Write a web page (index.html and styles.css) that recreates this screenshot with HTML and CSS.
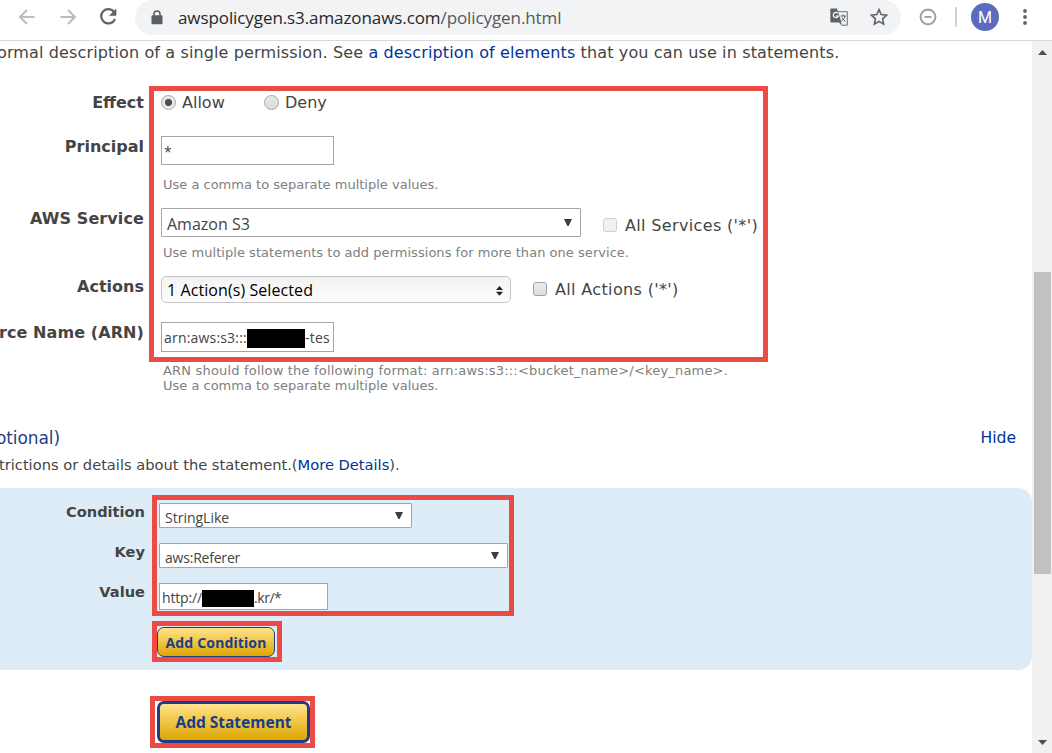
FILE: index.html
```html
<!DOCTYPE html>
<html lang="en">
<head>
<meta charset="utf-8">
<title>AWS Policy Generator</title>
<link rel="stylesheet" href="styles.css">
</head>
<body>
<header class="toolbar">
  <svg class="nav back" width="18" height="18" viewBox="0 0 18 18"><path d="M16.500 9H2.500M9 2L2 9l7 7"/></svg>
  <svg class="nav forward" width="18" height="18" viewBox="0 0 18 18"><path d="M1.500 9h14M9 2l7 7-7 7"/></svg>
  <svg class="reload" width="20" height="20" viewBox="0 0 20 20"><path class="ring" d="M16.300 5.200A7.200 7.200 0 1 0 17 12"/><path class="tip" d="M18.300 1.500v7.300H11z"/></svg>
  <div class="omnibox">
    <svg class="lock" width="12" height="15" viewBox="0 0 12 15"><path d="M3 6V4a3 3 0 0 1 6 0v2" fill="none" stroke="#5a5d61" stroke-width="1.500"/><rect x="0.500" y="5.300" width="11" height="9" rx="1" fill="#5a5d61"/></svg>
    <span class="url"><b>awspolicygen.s3.amazonaws.com</b>/policygen.html</span>
    <svg class="translate" width="19" height="19" viewBox="0 0 19 19"><path d="M8 3.700h9.300v13.500H11.500" fill="#f1f3f4" stroke="#6b6e72"/><path d="M1.500 0.500H7l4.500 14H1.500a1.200 1.200 0 0 1-1.200-1.200V1.700A1.200 1.200 0 0 1 1.500.5z" fill="#5f6368"/><path d="M7.800 5.300A2.600 2.600 0 1 0 8.300 8H5.800" fill="none" stroke="#fff" stroke-width="1.200"/><path d="M8.800 14.500h2.700v2.800z" fill="#5f6368"/><path d="M10.500 8h5.500M13.200 6.500V8M15 8c-.5 2.500-2 4-3.500 5M11.800 9.500c.8 1.800 2 3 3.700 4" fill="none" stroke="#5f6368"/></svg>
    <svg class="star" width="18" height="18" viewBox="0 0 18 18"><path d="M9 1.700l2.200 4.900 5.400.6-4 3.600 1.100 5.300L9 13.400l-4.700 2.700 1.100-5.300-4-3.600 5.400-.6z" fill="none" stroke="#5f6368" stroke-width="1.600"/></svg>
  </div>
  <svg class="extension" width="18" height="18" viewBox="0 0 18 18"><circle cx="9" cy="9" r="7.400" fill="none" stroke="#a3a3a3" stroke-width="2.100"/><path d="M5.500 9h7" stroke="#a3a3a3" stroke-width="2"/></svg>
  <i class="divider"></i>
  <span class="avatar">M</span>
  <svg class="more" width="4" height="18" viewBox="0 0 4 18"><circle cx="2" cy="3" r="1.900"/><circle cx="2" cy="9" r="1.900"/><circle cx="2" cy="15" r="1.900"/></svg>
</header>

<div class="viewport">
  <main class="page">
    <p class="intro">ormal description of a single permission. See <a>a description of elements</a> that you can use in statements.</p>

    <div class="row effect">
      <label>Effect</label>
      <div class="field choices">
        <i class="radio on"></i><span class="allow">Allow</span>
        <i class="radio"></i><span>Deny</span>
      </div>
    </div>
    <div class="row principal">
      <label>Principal</label>
      <div class="field">
        <div class="input"><span>*</span></div>
        <p class="hint">Use a comma to separate multiple values.</p>
      </div>
    </div>
    <div class="row service">
      <label>AWS Service</label>
      <div class="field">
        <div class="line">
          <div class="select"><span>Amazon S3</span><svg class="caret" width="8" height="7" viewBox="0 0 8 7"><path d="M0 0h8L4.600 7H3.400z"/></svg></div>
          <i class="check disabled"></i><span class="check-text">All Services ('*')</span>
        </div>
        <p class="hint wide">Use multiple statements to add permissions for more than one service.</p>
      </div>
    </div>
    <div class="row actions">
      <label>Actions</label>
      <div class="field line">
        <div class="multi"><span>1 Action(s) Selected</span><svg width="7" height="10" viewBox="0 0 7 10"><path d="M0 4L3.500 0 7 4zM0 5.700h7L3.500 9.700z"/></svg></div>
        <i class="check"></i><span class="check-text">All Actions ('*')</span>
      </div>
    </div>
    <div class="row arn">
      <label>rce Name (ARN)</label>
      <div class="field">
        <div class="input"><span class="arn-start">arn:aws:s3:::</span><i class="mask"></i><span class="arn-end">-tes</span></div>
        <p class="hint"><span class="format">ARN should follow the following format: arn:aws:s3:::&lt;bucket_name&gt;/&lt;key_name&gt;.</span><br>Use a comma to separate multiple values.</p>
      </div>
    </div>

    <div class="section-head"><span>otional)</span><a>Hide</a></div>
    <p class="section-text">trictions or details about the statement.(<a>More Details</a>).</p>

    <section class="conditions">
      <div class="row">
        <label>Condition</label>
        <div class="field"><div class="select short"><span>StringLike</span><svg class="caret" width="8" height="7" viewBox="0 0 8 7"><path d="M0 0h8L4.600 7H3.400z"/></svg></div></div>
      </div>
      <div class="row">
        <label>Key</label>
        <div class="field"><div class="select long"><span class="key-name">aws:Referer</span><svg class="caret" width="8" height="7" viewBox="0 0 8 7"><path d="M0 0h8L4.600 7H3.400z"/></svg></div></div>
      </div>
      <div class="row">
        <label>Value</label>
        <div class="field"><div class="input"><span class="scheme">http://</span><i class="mask"></i><span class="domain">.kr/*</span></div></div>
      </div>
      <button class="gold add-condition">Add Condition</button>
    </section>
    <button class="gold add-statement">Add Statement</button>
  </main>
  <aside class="scrollbar">
    <svg width="9" height="5" viewBox="0 0 9 5"><path d="M0 5L4.500 0 9 5z"/></svg>
    <i class="thumb"></i>
    <svg width="9" height="5" viewBox="0 0 9 5"><path d="M0 0h9L4.500 5z"/></svg>
  </aside>
</div>

<i class="mark mark-form"></i>
<i class="mark mark-conditions"></i>
<i class="mark mark-condition-button"></i>
<i class="mark mark-statement-button"></i>
</body>
</html>
```
FILE: styles.css
```css
* { box-sizing: border-box; }
body {
  margin: 0;
  width: 1052px;
  height: 753px;
  overflow: hidden;
  position: relative;
  background: #fff;
  color: #444;
  font: 16px/20px "DejaVu Sans", sans-serif;
}
p { margin: 0; }
a { color: #039; }
svg, i { display: block; flex: none; }

/* Browser toolbar */
.toolbar {
  display: flex;
  align-items: center;
  height: 41px;
  padding: 0 25px 6px 18px;
  border-bottom: 1px solid #d6d8da;
}
.nav { fill: none; stroke: #babcbe; stroke-width: 2; }
.forward { margin-left: 23px; }
.reload { margin-left: 21px; }
.reload .ring { fill: none; stroke: #5f6368; stroke-width: 2.200; }
.reload .tip { fill: #5f6368; }
.omnibox {
  display: flex;
  align-items: center;
  width: 767px;
  height: 35px;
  margin-left: 17px;
  padding: 0 13px 0 16px;
  border-radius: 18px;
  background: #f1f3f4;
}
.url {
  flex: 1;
  margin-left: 15px;
  color: #55585c;
  font: 17px/24px "Open Sans", sans-serif;
  letter-spacing: -0.090px;
  padding-top: 1px;
}
.url b { font-weight: 400; color: #26282b; }
.translate { margin-right: 21px; }
.extension { margin-left: 18px; }
.divider { width: 2px; height: 20px; margin: 0 14px 0 18px; background: #d0d2d4; }
.avatar {
  width: 28px;
  height: 28px;
  border-radius: 50%;
  background: #5c6bc0;
  color: #fff;
  font: 16px/29px Roboto, sans-serif;
  text-align: center;
}
.more { margin-left: 24px; fill: #5f6368; }

/* Page */
.viewport { display: flex; height: 712px; }
.page { width: 1032px; overflow: hidden; }
.intro { height: 46px; line-height: 23px; white-space: nowrap; letter-spacing: 0.130px; margin-left: -3px; }
.row { display: flex; align-items: flex-start; }
.row label {
  display: flex;
  justify-content: flex-end;
  width: 144px;
  margin-right: 17px;
  padding-top: 1px;
  font-weight: 700;
  white-space: nowrap;
}
.effect { height: 49px; line-height: 30px; }
.principal { height: 72px; }
.service { height: 68px; }
.service label { letter-spacing: 0.100px; }
.actions { height: 46px; }
.arn { height: 103px; }
.arn label { letter-spacing: 0.090px; }
.choices, .line { display: flex; align-items: center; }
.radio {
  width: 15px;
  height: 15px;
  border: 1px solid #a8a8a8;
  border-radius: 50%;
  background: linear-gradient(#e8e8e8, #dcdcdc);
}
.radio.on { background: radial-gradient(circle, #505050 0 3.200px, #e9e9e9 4px); }
.choices span { margin-left: 6px; padding-top: 1px; }
.choices { height: 31px; }
.choices .allow { width: 82px; }
.input, .select {
  display: flex;
  align-items: center;
  border: 1px solid #a6a6a6;
  background: #fff;
  font: 14px/20px "Open Sans", sans-serif;
}
.input { width: 173px; height: 29px; padding: 2px 2px 0; }
.hint {
  margin: 12px 0 0 2px;
  color: #808080;
  font-size: 13px;
  line-height: 15px;
  white-space: nowrap;
}
.wide { margin-top: 8px; letter-spacing: 0.034px; }
.select { width: 420px; height: 29px; padding: 3px 8px 0 5px; border-radius: 1px; font-size: 16px; justify-content: space-between; }
.caret { fill: #3c3c3c; margin-bottom: 4px; }
.check {
  width: 14px;
  height: 14px;
  border: 1px solid #a3a3a3;
  border-radius: 3px;
  background: linear-gradient(#ececec, #dcdcdc);
  margin: 0 8px 0 22px;
}
.actions .check { margin-bottom: 1px; }
.check.disabled { border-color: #cfcfcf; background: #f0f0f0; margin-top: 4px; }
.disabled + .check-text { margin-top: 6px; }
.check-text { letter-spacing: 0.350px; white-space: nowrap; }
.service .line { height: 29px; }
.multi {
  display: flex;
  align-items: center;
  justify-content: space-between;
  width: 350px;
  height: 27px;
  padding: 0 7px 0 5px;
  border: 1px solid #c5c5c5;
  border-radius: 5px;
  background: linear-gradient(#f3f3f3, #fdfdfd);
  color: #000;
  font: 16px/22px "Open Sans", sans-serif;
  letter-spacing: 0.080px;
}
.multi svg { fill: #222; margin-top: 2px; }
.mask { background: #000; }
.arn .input { height: 30px; }
.arn-start { width: 83px; letter-spacing: 0.190px; }
.arn-end { letter-spacing: 0.250px; }
.arn .mask { width: 58px; height: 19px; }
.arn .hint { margin-top: 11px; }
.format { letter-spacing: 0.187px; }

/* Conditions */
.section-head {
  display: flex;
  justify-content: space-between;
  height: 27px;
  padding: 1px 16px 0 0;
  line-height: 24px;
  color: #1f3f85;
}
.section-head span { font-size: 17px; letter-spacing: -0.100px; margin-left: -4px; }
.section-head a { font-size: 15.600px; }
.section-text { height: 36px; padding-top: 1px; font-size: 14.650px; line-height: 24px; white-space: nowrap; margin-left: -1px; }
.conditions { height: 182px; padding-top: 15px; background: #deecf7; border-radius: 0 14px 14px 0; }
.conditions .row { height: 40px; }
.conditions label { width: 145px; margin-right: 14px; padding-top: 0; font-size: 14.600px; line-height: 18px; }
.conditions .select { height: 25px; font-size: 14px; padding: 5px 8px 0 5px; }
.conditions .caret { margin-bottom: 6px; }
.conditions .short { width: 253px; }
.conditions .long { width: 349px; }
.key-name { letter-spacing: -0.210px; }
.conditions .input { width: 169px; height: 27px; padding-top: 3px; }
.scheme { width: 40px; letter-spacing: -0.150px; }
.conditions .mask { width: 52px; height: 17px; }
.domain { letter-spacing: -0.450px; }
.gold {
  display: block;
  padding: 0;
  color: #1c3d85;
  background: linear-gradient(#ffe48c, #dfa600);
  border: 1px solid #1c3d85;
  font-family: "Noto Sans", sans-serif;
  font-weight: 700;
}
.add-condition { width: 118px; height: 30px; margin: 4px 0 0 157px; border-radius: 7px; font-size: 14px; letter-spacing: 0.150px; }
.add-statement { width: 153px; height: 42px; margin: 31px 0 0 157px; border-width: 3px; border-radius: 7px; font-size: 15.500px; }

/* Scrollbar */
.scrollbar {
  display: flex;
  flex-direction: column;
  align-items: center;
  width: 20px;
  padding: 9px 0 8px;
  background: #f1f1f1;
}
.scrollbar svg { fill: #505050; }
.thumb { width: 17px; height: 302px; margin: 217px 0 auto 1px; background: #c1c1c1; }

/* Highlight frames laid over the page */
.mark { position: absolute; border: 5px solid #ea4b45; }
.mark-form { left: 149px; top: 86px; width: 619px; height: 276px; }
.mark-conditions { left: 152px; top: 495px; width: 362px; height: 121px; }
.mark-condition-button { left: 152px; top: 621px; width: 130px; height: 41px; }
.mark-statement-button { left: 150px; top: 696px; width: 165px; height: 52px; }
```
